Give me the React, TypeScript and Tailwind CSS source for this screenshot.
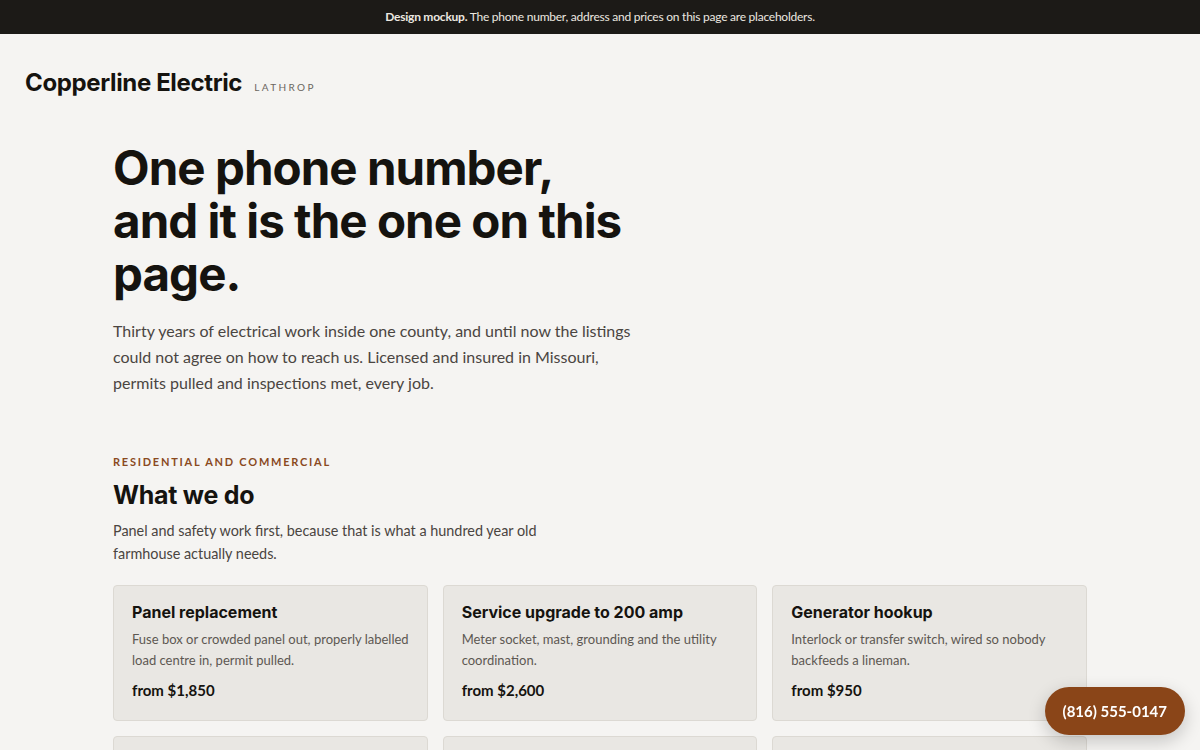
import React from 'react';

const services = [
  {
    title: 'Panel replacement',
    text: 'Fuse box or crowded panel out, properly labelled load centre in, permit pulled.',
    price: 'from $1,850',
  },
  {
    title: 'Service upgrade to 200 amp',
    text: 'Meter socket, mast, grounding and the utility coordination.',
    price: 'from $2,600',
  },
  {
    title: 'Generator hookup',
    text: 'Interlock or transfer switch, wired so nobody backfeeds a lineman.',
    price: 'from $950',
  },
  { title: 'Whole-house surge protection', text: 'Type 1 or 2 device at the panel.', price: 'from $420' },
  { title: 'EV charger circuit', text: 'Dedicated 240 V circuit and outlet.', price: 'from $700' },
  { title: 'Troubleshooting', text: 'Tripping breakers and dead outlets.', price: 'from $140' },
];

const heading = { fontFamily: 'Inter, "Noto Sans", sans-serif' };

const App = () => {
  return (
    <div className="min-h-screen bg-[#f5f4f2] text-[#1a1815]" style={{ fontFamily: 'Lato, "Noto Sans", sans-serif' }}>
      <div className="h-[34px] bg-[#1c1a17] flex items-center justify-center text-[12px] text-[#ece8e0] tracking-[-0.02em]">
        <span>
          <strong className="font-bold">Design mockup.</strong> The phone number, address and prices on this page are placeholders.
        </span>
      </div>

      <header className="px-[25px] pt-[31px] flex items-baseline gap-[12px]">
        <span className="text-[24px] font-bold tracking-[-0.015em] text-[#15130f]" style={heading}>
          Copperline Electric
        </span>
        <span className="text-[10px] tracking-[0.24em] text-[#6b6660]">LATHROP</span>
      </header>

      <main className="max-w-[974px] mx-auto">
        <section className="pt-[40px]">
          <h1
            className="text-[47.5px] leading-[53px] font-bold tracking-[-0.02em] max-w-[560px] text-[#15130f]"
            style={heading}
          >
            One phone number,
            <br />
            and it is the one on this page.
          </h1>
          <p className="mt-[18px] text-[16px] leading-[26px] text-[#4a4541] max-w-[540px]">
            Thirty years of electrical work inside one county, and until now the listings could not agree on how to reach us. Licensed and insured in Missouri, permits pulled and inspections met, every job.
          </p>
        </section>

        <section className="pt-[58px]">
          <div className="text-[11px] font-bold tracking-[0.16em] text-[#8a4a1e]">RESIDENTIAL AND COMMERCIAL</div>
          <h2 className="mt-[9px] text-[25px] leading-[30px] font-bold tracking-[-0.01em] text-[#15130f]" style={heading}>
            What we do
          </h2>
          <p className="mt-[9px] text-[14.4px] leading-[23px] text-[#4a4541] max-w-[440px]">
            Panel and safety work first, because that is what a hundred year old farmhouse actually needs.
          </p>

          <div className="mt-[20px] grid grid-cols-3 gap-[15px]">
            {services.map((s) => (
              <div key={s.title} className="h-[136px] rounded-[4px] border border-[#dcd9d3] bg-[#e9e7e3] px-[18px] pt-[15px]">
                <h3 className="text-[16px] leading-[22px] font-bold text-[#15130f]" style={heading}>
                  {s.title}
                </h3>
                <p className="mt-[6px] text-[13px] leading-[21px] text-[#5d5852]">{s.text}</p>
                <div className="mt-[8px] text-[15px] font-bold text-[#15130f]">{s.price}</div>
              </div>
            ))}
          </div>
        </section>
      </main>

      <a
        href="#"
        className="fixed right-[15px] bottom-[15px] h-[48px] px-[18px] rounded-full bg-[#8a4518] text-white text-[15px] font-bold flex items-center shadow-[0_6px_18px_rgba(0,0,0,0.2)]"
      >
        (816) 555-0147
      </a>
    </div>
  );
};

export default App;
